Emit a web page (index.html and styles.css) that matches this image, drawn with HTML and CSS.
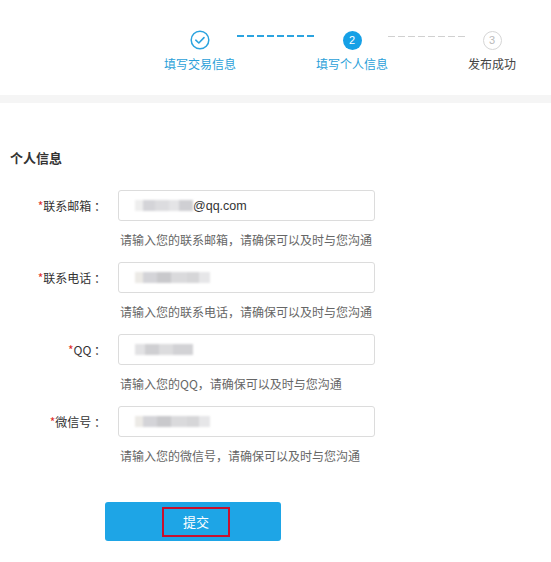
FILE: index.html
```html
<!DOCTYPE html>
<html lang="zh">
<head>
<meta charset="utf-8">
<link rel="stylesheet" href="styles.css">
</head>
<body>
<header class="steps-bar">
  <div class="steps">
    <div class="step step-done">
      <svg class="step-icon" width="20" height="20" viewBox="0 0 20 20">
        <circle cx="10" cy="10" r="8.8" fill="none" stroke="#2ba3df" stroke-width="1.5"/>
        <path d="M5.8 10.2 L8.8 13 L14 7.6" fill="none" stroke="#2ba3df" stroke-width="1.6" stroke-linecap="round" stroke-linejoin="round"/>
      </svg>
      <span class="step-label">填写交易信息</span>
    </div>
    <div class="line line-active"></div>
    <div class="step step-current">
      <span class="step-num">2</span>
      <span class="step-label">填写个人信息</span>
    </div>
    <div class="line line-todo"></div>
    <div class="step step-todo">
      <span class="step-num">3</span>
      <span class="step-label">发布成功</span>
    </div>
  </div>
</header>
<div class="band"></div>
<main class="content">
  <h2 class="section-title">个人信息</h2>
  <form class="form">
    <div class="row">
      <label class="label"><span class="req">*</span>联系邮箱 ：</label>
      <div class="field">
        <div class="input"><span class="blur blur-a"></span><span class="val">@qq.com</span></div>
        <p class="hint">请输入您的联系邮箱，请确保可以及时与您沟通</p>
      </div>
    </div>
    <div class="row">
      <label class="label"><span class="req">*</span>联系电话 ：</label>
      <div class="field">
        <div class="input"><span class="blur blur-b"></span></div>
        <p class="hint">请输入您的联系电话，请确保可以及时与您沟通</p>
      </div>
    </div>
    <div class="row">
      <label class="label"><span class="req">*</span>QQ ：</label>
      <div class="field">
        <div class="input"><span class="blur blur-c"></span></div>
        <p class="hint">请输入您的QQ，请确保可以及时与您沟通</p>
      </div>
    </div>
    <div class="row">
      <label class="label"><span class="req">*</span>微信号 ：</label>
      <div class="field">
        <div class="input"><span class="blur blur-b"></span></div>
        <p class="hint">请输入您的微信号，请确保可以及时与您沟通</p>
      </div>
    </div>
    <div class="actions">
      <button type="button" class="submit"><span class="submit-mark">提交</span></button>
    </div>
  </form>
</main>
</body>
</html>
```
FILE: styles.css
```css
html, body {
  margin: 0;
  padding: 0;
  background: #fff;
  font-family: "Noto Sans CJK SC", "Microsoft YaHei", "Liberation Sans", sans-serif;
  font-size: 12px;
  color: #333;
}

.steps-bar {
  height: 95px;
  box-sizing: border-box;
  padding-top: 30px;
}

.steps {
  display: flex;
  align-items: flex-start;
  margin-left: 164px;
}

.step {
  display: flex;
  flex-direction: column;
  align-items: center;
  width: 72px;
}

.step-todo {
  width: 48px;
}

.step-icon {
  display: block;
  width: 20px;
  height: 20px;
}

.step-num {
  display: flex;
  align-items: center;
  justify-content: center;
  box-sizing: border-box;
  width: 19px;
  height: 19px;
  margin-top: 1px;
  border-radius: 50%;
  font-family: "Liberation Sans", sans-serif;
  font-size: 11px;
  line-height: 1;
}

.step-current .step-num {
  background: #16a0e6;
  color: #fff;
}

.step-todo .step-num {
  border: 1px solid #d6d6d6;
  color: #bbb;
}

.step-label {
  margin-top: 6px;
  font-size: 12px;
  line-height: 16px;
  white-space: nowrap;
}

.step-done .step-label,
.step-current .step-label {
  color: #2b9fd9;
}

.step-todo .step-label {
  color: #444;
}

.line {
  width: 80px;
  margin-top: 5px;
}

.line-active {
  height: 2px;
  background: repeating-linear-gradient(to right, #2ba3df 0 7px, transparent 7px 10px);
  margin-left: 1px;
  width: 79px;
}

.line-todo {
  height: 1px;
  margin-top: 6px;
  background: repeating-linear-gradient(to right, #d0d0d0 0 7px, transparent 7px 10px);
}

.band {
  height: 8px;
  background: #f5f5f5;
}

.content {
  padding: 0 10px;
}

.section-title {
  margin: 46px 0 0;
  font-size: 13px;
  font-weight: bold;
  line-height: 18px;
  color: #333;
}

.form {
  margin-top: 23px;
}

.row {
  display: grid;
  grid-template-columns: 96px 257px;
  column-gap: 12px;
  margin-bottom: 13px;
}

.label {
  height: 31px;
  line-height: 31px;
  text-align: right;
  white-space: nowrap;
  color: #333;
}

.req {
  color: #e0302a;
}

.input {
  box-sizing: border-box;
  height: 31px;
  border: 1px solid #dcdcdc;
  border-radius: 3px;
  display: flex;
  align-items: center;
  padding-left: 16px;
}

.val {
  font-family: "Liberation Sans", sans-serif;
  font-size: 12.5px;
  color: #333;
}

.blur {
  display: block;
  height: 11px;
  filter: blur(0.8px);
}

.blur-a {
  width: 58px;
  background: linear-gradient(to right, #eee 0 8px, #d4d4d8 8px 20px, #dcdcdf 20px 34px, #e4e4e6 34px 44px, #cfcfd3 44px 58px);
}

.blur-b {
  width: 75px;
  background: linear-gradient(to right, #eceae6 0 8px, #d4d4d8 8px 22px, #c9c9cc 22px 36px, #dadadc 36px 52px, #d6d6d8 52px 64px, #e6e6e8 64px 75px);
}

.blur-c {
  width: 58px;
  background: linear-gradient(to right, #e2e2e4 0 10px, #cfcfd2 10px 24px, #dcdcde 24px 38px, #d2d2d5 38px 58px);
}

.hint {
  margin: 10px 0 0 2px;
  line-height: 18px;
  font-size: 12px;
  color: #666;
  white-space: nowrap;
}

.actions {
  padding-left: 95px;
  margin-top: 37px;
}

.submit {
  box-sizing: border-box;
  width: 176px;
  height: 39px;
  border: none;
  border-radius: 3px;
  background: #1ea5e6;
  color: #fff;
  font-family: "Noto Sans CJK SC", sans-serif;
  font-size: 13px;
  padding: 0;
  display: flex;
  align-items: center;
  justify-content: center;
  cursor: pointer;
}

.submit-mark {
  box-sizing: border-box;
  width: 68px;
  height: 30px;
  border: 2px solid #c8102e;
  display: flex;
  align-items: center;
  justify-content: center;
  margin-left: 6px;
}
```
